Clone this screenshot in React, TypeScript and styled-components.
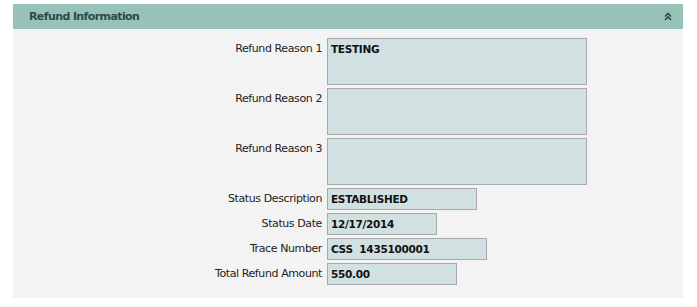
import styled, { createGlobalStyle } from "styled-components";

const GlobalStyle = createGlobalStyle`
  body {
    margin: 0;
    background: #ffffff;
    font-family: "DejaVu Sans", Verdana, sans-serif;
  }
`;

interface fieldJson {
  label: string,
  value: string,
  width?: number,
  multi?: boolean
}

const FIELDS: fieldJson[] = [
  { label: "Refund Reason 1", value: "TESTING", multi: true },
  { label: "Refund Reason 2", value: "", multi: true },
  { label: "Refund Reason 3", value: "", multi: true },
  { label: "Status Description", value: "ESTABLISHED", width: 150 },
  { label: "Status Date", value: "12/17/2014", width: 110 },
  { label: "Trace Number", value: "CSS  1435100001", width: 160 },
  { label: "Total Refund Amount", value: "550.00", width: 130 },
];

const CollapseIcon = () => (
  <svg width="8" height="9" viewBox="0 0 8 9">
    <polyline points="1,4.5 4,1.5 7,4.5" fill="none" stroke="#2d4a47" strokeWidth="1.6" />
    <polyline points="1,8 4,5 7,8" fill="none" stroke="#2d4a47" strokeWidth="1.6" />
  </svg>
);

const App = () => {
  const ROWS = FIELDS.map((field: fieldJson) => <FormRow key={field.label}>
    <Label>{field.label}</Label>
    {field.multi
      ? <TextBox>{field.value}</TextBox>
      : <InputBox $width={field.width || 150}>{field.value}</InputBox>}
  </FormRow>);

  return (
    <>
      <GlobalStyle />
      <Page>
        <Panel>
          <Header>
            <HeaderTitle>Refund Information</HeaderTitle>
            <Toggle><CollapseIcon /></Toggle>
          </Header>
          <Body>
            {ROWS}
          </Body>
        </Panel>
      </Page>
    </>
  )
}

const Page = styled.div`
  padding: 4px 14px 0 13px;
  width: 697px;
  height: 307px;
  box-sizing: border-box;
`

const Panel = styled.div`
  width: 670px;
  display: flex;
  flex-direction: column;
`

const Header = styled.div`
  height: 25px;
  background-color: #97c2b7;
  display: flex;
  align-items: center;
  justify-content: space-between;
  padding: 0 11px 0 16px;
`

const HeaderTitle = styled.div`
  font-size: 11px;
  font-weight: bold;
  letter-spacing: -0.6px;
  color: #2d4a47;
`

const Toggle = styled.div`
  display: flex;
  align-items: center;
  cursor: pointer;
`

const Body = styled.div`
  background-color: #f3f3f3;
  padding: 9px 0 13px 0;
  display: flex;
  flex-direction: column;
  row-gap: 3px;
`

const FormRow = styled.div`
  display: grid;
  grid-template-columns: 309px auto;
  column-gap: 5px;
  align-items: start;
`

const Label = styled.div`
  height: 22px;
  line-height: 22px;
  text-align: right;
  font-size: 11px;
  letter-spacing: -0.4px;
  color: #222;
  white-space: nowrap;
`

const InputBox = styled.div<{ $width: number }>`
  width: ${({ $width }) => $width}px;
  height: 22px;
  box-sizing: border-box;
  background-color: #d1e0e0;
  border: 1px solid #a7a9ad;
  padding: 0 3px;
  line-height: 20px;
  font-size: 10.5px;
  font-weight: bold;
  letter-spacing: -0.3px;
  color: #111;
  white-space: pre;
`

const TextBox = styled.div`
  width: 260px;
  height: 47px;
  box-sizing: border-box;
  background-color: #d1e0e0;
  border: 1px solid #a7a9ad;
  padding: 2px 3px;
  line-height: 16px;
  font-size: 10.5px;
  font-weight: bold;
  letter-spacing: -0.3px;
  color: #111;
`

export default App;
